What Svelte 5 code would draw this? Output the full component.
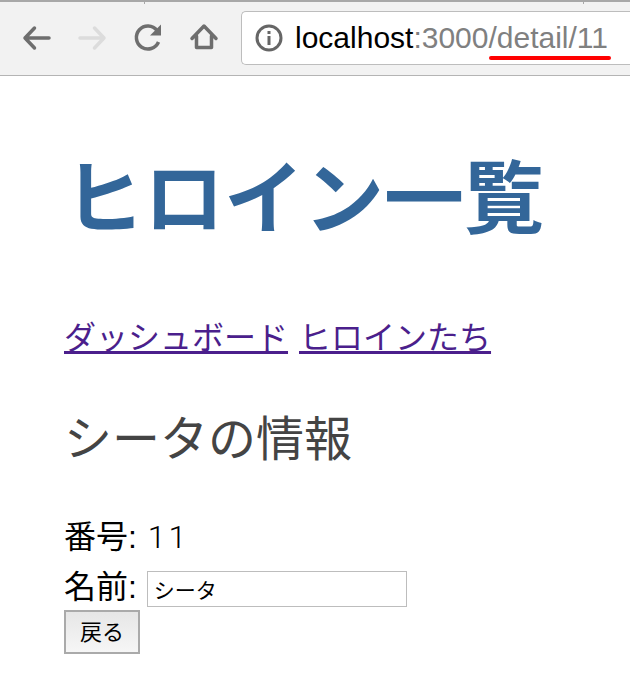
<script>
  const nav = ['ダッシュボード', 'ヒロインたち'];
</script>

<div class="page">
  <div class="chrome">
    <i class="tick one"></i><i class="tick two"></i>
    <div class="tools">
      <svg class="icon" width="30" height="30" viewBox="0 0 30 30"><path d="M28 15H4M13.500 5 4 15l9.500 10" class="st dark" /></svg>
      <svg class="icon" width="30" height="30" viewBox="0 0 30 30"><path d="M3 15h24M17.500 5 27 15l-9.500 10" class="st light" /></svg>
      <svg class="icon" width="30" height="30" viewBox="0 0 30 30"><path d="M25.500 19A11.500 11.500 0 1 1 24 7.500" class="st dark nocap" /><path d="M28 1.500V12.500H17z" fill="#6e6e6e" /></svg>
      <svg class="icon" width="30" height="30" viewBox="0 0 30 30"><path d="M3 15.500 15 3l12 12.500M7.500 13v11.500h15V13" class="st dark" /></svg>
    </div>
    <div class="omni">
      <svg width="28" height="28" viewBox="0 0 28 28"><circle cx="14" cy="14" r="12" fill="none" stroke="#666" stroke-width="3" /><rect x="12.500" y="12" width="3" height="9" fill="#666" /><rect x="12.500" y="7" width="3" height="3" fill="#666" /></svg>
      <div class="url">localhost<span>:3000/detail/11</span><i></i></div>
    </div>
  </div>

  <main>
    <h1>ヒロイン一覧</h1>
    <nav>
      {#each nav as item}
        <a href="#top">{item}</a>
      {/each}
    </nav>
    <h2>シータの情報</h2>
    <div class="row">番号: <span class="num">11</span></div>
    <div class="row name">名前: <input value="シータ" /></div>
    <button>戻る</button>
  </main>
</div>

<style>
  :global(body) { margin: 0; background: #fff; }
  .page { width: 630px; height: 700px; overflow: hidden; font-family: "Liberation Sans", "Noto Sans CJK JP", sans-serif; }
  .chrome { position: relative; height: 76px; box-sizing: border-box; background: #f2f2f2; border-top: 2px solid #a8a8a8; border-bottom: 1px solid #b4b4b4; display: flex; align-items: center; padding: 0 0 2px 21px; }
  .tick { position: absolute; top: -2px; width: 1px; height: 4px; background: #a8a8a8; }
  .tick.one { left: 144px; }
  .tick.two { left: 583px; }
  .tools { display: flex; gap: 26px; }
  .icon { display: block; }
  .st { fill: none; stroke-width: 3.500; stroke-linecap: round; stroke-linejoin: round; }
  .nocap { stroke-linecap: butt; }
  .dark { stroke: #6e6e6e; }
  .light { stroke: #dcdcdc; }
  .omni { position: relative; margin-left: 22px; flex: 1; height: 54px; box-sizing: border-box; background: #fff; border: 1px solid #bdbdbd; border-right: 0; border-radius: 5px 0 0 5px; display: flex; align-items: center; padding-left: 13px; gap: 12px; }
  .url { position: relative; font-size: 30px; color: #000; white-space: nowrap; }
  .url span { color: #808080; }
  .url i { position: absolute; left: 194px; top: 35px; width: 122px; height: 4px; border-radius: 2px; background: #f00; }
  main { padding: 0 64px; }
  h1 { margin: 76px 0 0; font-size: 80px; line-height: 96px; font-weight: 700; color: #369; white-space: nowrap; }
  nav { margin-top: 68px; display: flex; gap: 11px; font-size: 32px; line-height: 44px; }
  a { color: #4b1f8c; }
  h2 { margin: 48px 0 0; font-size: 48px; line-height: 64px; font-weight: 400; color: #444; }
  .row { font-size: 32px; line-height: 46px; color: #000; }
  .row:first-of-type { margin-top: 42px; }
  .num { font-family: Roboto, sans-serif; font-weight: 300; letter-spacing: 3px; margin-left: 2px; }
  .name { display: flex; align-items: center; gap: 1px; height: 46px; margin-top: 4px; white-space: pre; }
  input { width: 260px; height: 36px; box-sizing: border-box; border: 1px solid #bdbdbd; font: 21px "Liberation Sans", "Noto Sans CJK JP", sans-serif; padding: 0 6px; margin: 4px 0 0; }
  button { display: block; width: 76px; height: 44px; border: 2px solid #aaa; background: linear-gradient(#e6e6e6, #f6f6f6); font: 22px "Liberation Sans", "Noto Sans CJK JP", sans-serif; padding: 0 0 5px; color: #000; }
</style>
